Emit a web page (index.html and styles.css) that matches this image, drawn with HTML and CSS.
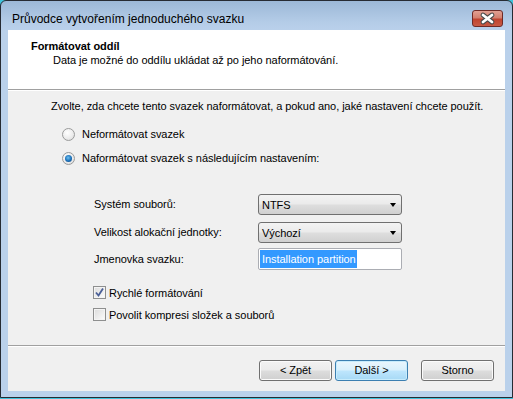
FILE: index.html
```html
<!DOCTYPE html>
<html lang="cs">
<head>
<meta charset="utf-8">
<title>Průvodce vytvořením jednoduchého svazku</title>
<link rel="stylesheet" href="styles.css">
</head>
<body>
<div class="window">
  <div class="titlebar">
    <span class="title">Průvodce vytvořením jednoduchého svazku</span>
    <div class="close">
      <svg width="31" height="17" viewBox="0 0 31 17">
        <path d="M11 5 L20 12 M20 5 L11 12" stroke="#4a4a4a" stroke-width="4.8" stroke-linecap="round"/>
        <path d="M11 5 L20 12 M20 5 L11 12" stroke="#ffffff" stroke-width="2.8" stroke-linecap="round"/>
      </svg>
    </div>
  </div>
  <div class="client">
    <div class="header">
      <div class="h-title">Formátovat oddíl</div>
      <div class="h-sub">Data je možné do oddílu ukládat až po jeho naformátování.</div>
    </div>
    <div class="content">
      <div class="intro">Zvolte, zda chcete tento svazek naformátovat, a pokud ano, jaké nastavení chcete použít.</div>
      <div class="radio-row first"><span class="radio"></span><span>Neformátovat svazek</span></div>
      <div class="radio-row second"><span class="radio checked"><span class="dot"></span></span><span>Naformátovat svazek s následujícím nastavením:</span></div>
      <div class="form">
        <div class="form-row r1">
          <span class="label">Systém souborů:</span>
          <div class="combo"><span>NTFS</span><span class="arrow"></span></div>
        </div>
        <div class="form-row r2">
          <span class="label">Velikost alokační jednotky:</span>
          <div class="combo"><span>Výchozí</span><span class="arrow"></span></div>
        </div>
        <div class="form-row r3">
          <span class="label">Jmenovka svazku:</span>
          <div class="textbox"><span class="sel">Installation partition</span></div>
        </div>
      </div>
      <div class="check-row c1">
        <span class="check">
          <svg width="11" height="11" viewBox="0 0 11 11"><path d="M2 5.5 L4.5 8.5 L9 1.5" fill="none" stroke="#4a5f97" stroke-width="1.8"/></svg>
        </span>
        <span>Rychlé formátování</span>
      </div>
      <div class="check-row c2">
        <span class="check"></span>
        <span>Povolit kompresi složek a souborů</span>
      </div>
    </div>
    <div class="footer">
      <div class="btn">&lt; Zpět</div>
      <div class="btn default">Další &gt;</div>
      <div class="btn cancel">Storno</div>
    </div>
  </div>
</div>
</body>
</html>
```
FILE: styles.css
```css
html, body {
  margin: 0;
  padding: 0;
}
body {
  width: 513px;
  height: 399px;
  background: #3fc3dc;
  font-family: "Liberation Sans", Arial, sans-serif;
  font-size: 11px;
  letter-spacing: -0.05px;
  color: #000;
  overflow: hidden;
}
.window {
  box-sizing: border-box;
  width: 513px;
  height: 398px;
  border: 1px solid #262b33;
  border-radius: 6px 6px 0 0;
  background: linear-gradient(to bottom, #9cb8d7 0px, #b5cde8 22px, #bad1eb 30px, #bad1eb 100%);
  display: flex;
  flex-direction: column;
  padding: 0 7px 6px 7px;
}
.titlebar {
  height: 29px;
  display: flex;
  align-items: flex-start;
  position: relative;
}
.title {
  font-size: 12px;
  letter-spacing: 0;
  margin-left: 4px;
  margin-top: 11px;
  line-height: 14px;
  color: #000;
}
.close {
  position: absolute;
  right: 2px;
  top: 9px;
  width: 31px;
  height: 17px;
  box-sizing: border-box;
  border: 1px solid #6e2a26;
  border-radius: 3px;
  background: linear-gradient(to bottom, #e2a093 0%, #d3806f 45%, #c0432f 55%, #c85a44 100%);
  overflow: hidden;
}
.close svg {
  position: absolute;
  left: -1px;
  top: -1px;
}
.client {
  flex: 1;
  background: #f0f0f0;
  display: flex;
  flex-direction: column;
}
.header {
  height: 59px;
  background: #fff;
  border-bottom: 1px solid #a0a0a0;
  box-sizing: content-box;
  padding-left: 23px;
}
.h-title {
  font-weight: bold;
  line-height: 13px;
  margin-top: 10px;
}
.h-sub {
  line-height: 13px;
  margin-top: 1px;
  padding-left: 22px;
}
.content {
  flex: 1;
  padding-top: 10px;
  box-shadow: inset 0 1px 0 #ffffff;
}
.intro {
  line-height: 13px;
  padding-left: 43px;
}
.radio-row {
  display: flex;
  align-items: center;
  height: 14px;
  margin-left: 54px;
  gap: 7px;
}
.radio-row.first { margin-top: 14px; }
.radio-row.second { margin-top: 10px; }
.radio {
  box-sizing: border-box;
  width: 13px;
  height: 13px;
  border-radius: 50%;
  border: 1px solid #9a9b9b;
  background: radial-gradient(circle at 40% 35%, #ffffff 0%, #ececec 55%, #d6d6d6 100%);
  display: flex;
  align-items: center;
  justify-content: center;
}
.radio .dot {
  width: 7px;
  height: 7px;
  border-radius: 50%;
  background: radial-gradient(circle at 45% 40%, #6fc1f0 0%, #1a6fb8 55%, #0e3f73 100%);
}
.form {
  margin-top: 29px;
  margin-left: 86px;
}
.form-row {
  display: flex;
  align-items: center;
}
.form-row.r2 { margin-top: 7px; }
.form-row.r3 { margin-top: 5px; }
.label {
  width: 164px;
  line-height: 13px;
}
.combo {
  box-sizing: border-box;
  width: 144px;
  height: 21px;
  border: 1px solid #707070;
  border-radius: 3px;
  background: linear-gradient(to bottom, #f3f3f3 0%, #ebebeb 45%, #dddddd 55%, #d0d0d0 100%);
  display: flex;
  align-items: center;
  justify-content: space-between;
  padding: 0 5px 0 3px;
}
.arrow {
  width: 0;
  height: 0;
  border-left: 3.5px solid transparent;
  border-right: 3.5px solid transparent;
  border-top: 4px solid #000;
}
.textbox {
  box-sizing: border-box;
  width: 144px;
  height: 22px;
  border: 1px solid #abadb3;
  border-radius: 2px;
  background: #fff;
  display: flex;
  align-items: center;
  padding-left: 1px;
}
.sel {
  background: #3399ff;
  color: #fff;
  line-height: 18px;
  padding: 0 1px 0 2px;
}
.check-row {
  display: flex;
  align-items: center;
  height: 13px;
  margin-left: 85px;
  gap: 3px;
}
.check-row.c1 { margin-top: 16px; }
.check-row.c2 { margin-top: 9px; }
.check {
  box-sizing: border-box;
  width: 13px;
  height: 13px;
  border: 1px solid #8e8f8f;
  background: linear-gradient(135deg, #dcdcdc 0%, #f2f2f2 70%, #ffffff 100%);
  box-shadow: inset 0 0 0 1px #f4f4f4;
  display: flex;
  align-items: center;
  justify-content: center;
}
.footer {
  height: 46px;
  border-top: 1px solid #a0a0a0;
  box-shadow: inset 0 1px 0 #ffffff;
  display: flex;
  justify-content: flex-end;
  align-items: flex-start;
  padding-top: 14px;
  padding-right: 11px;
  box-sizing: border-box;
}
.btn {
  box-sizing: border-box;
  width: 73px;
  height: 21px;
  border: 1px solid #707070;
  border-radius: 3px;
  background: linear-gradient(to bottom, #f2f2f2 0%, #ebebeb 48%, #dddddd 52%, #cfcfcf 100%);
  box-shadow: inset 0 0 0 1px #fbfbfb;
  display: flex;
  align-items: center;
  justify-content: center;
  line-height: 13px;
  margin-left: 3px;
}
.btn.default {
  border-color: #3c7fb1;
  background: linear-gradient(to bottom, #eaf6fd 0%, #d9f0fc 48%, #bee6fd 52%, #a7d9f5 100%);
  box-shadow: inset 0 0 0 1px #c8ecfc;
}
.btn.cancel {
  margin-left: 13px;
}
```
